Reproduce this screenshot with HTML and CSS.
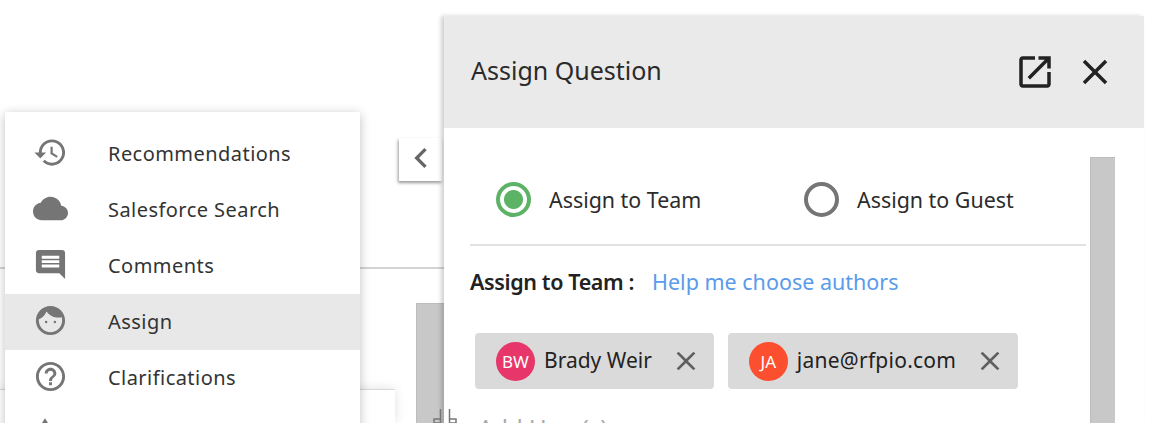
FILE: index.html
```html
<!DOCTYPE html>
<html lang="en">
<head>
<meta charset="utf-8">
<title>Assign Question</title>
<link rel="stylesheet" href="styles.css">
</head>
<body>
<div class="page">
  <div class="rule-line"></div>
  <div class="card-edge"></div>
  <div class="back-scroll"></div>
  <nav class="menu">
    <div class="menu-row">
      <svg class="menu-icon" viewBox="0 0 24 24"><path d="M13 3c-4.97 0-9 4.03-9 9H1l3.89 3.89.07.14L9 12H6c0-3.87 3.13-7 7-7s7 3.13 7 7-3.13 7-7 7c-1.93 0-3.68-.79-4.94-2.06l-1.42 1.42C8.27 19.99 10.51 21 13 21c4.97 0 9-4.03 9-9s-4.03-9-9-9zm-1 5v5l4.28 2.54.72-1.21-3.5-2.08V8H12z"/></svg>
      <span class="menu-label">Recommendations</span>
    </div>
    <div class="menu-row">
      <svg class="menu-icon" viewBox="0 0 24 24"><path d="M19.35 10.04C18.67 6.59 15.64 4 12 4 9.11 4 6.6 5.64 5.35 8.04 2.34 8.36 0 10.91 0 14c0 3.31 2.69 6 6 6h13c2.76 0 5-2.24 5-5 0-2.64-2.05-4.78-4.65-4.96z"/></svg>
      <span class="menu-label">Salesforce Search</span>
    </div>
    <div class="menu-row">
      <svg class="menu-icon" viewBox="0 0 24 24"><path d="M21.99 4c0-1.1-.89-2-1.99-2H4c-1.1 0-2 .9-2 2v12c0 1.1.9 2 2 2h14l4 4-.01-18zM18 14H6v-2h12v2zm0-3H6V9h12v2zm0-3H6V6h12v2z"/></svg>
      <span class="menu-label">Comments</span>
    </div>
    <div class="menu-row is-active">
      <svg class="menu-icon" viewBox="0 0 24 24"><circle cx="9" cy="13" r=".85"/><circle cx="15" cy="13" r=".85"/><path d="M12 2C6.48 2 2 6.48 2 12s4.48 10 10 10 10-4.48 10-10S17.52 2 12 2zm0 18c-4.41 0-8-3.59-8-8 0-.29.02-.58.05-.86 2.36-1.05 4.23-2.98 5.21-5.37C11.07 8.33 14.05 10 17.42 10c.78 0 1.53-.09 2.25-.26.21.71.33 1.47.33 2.26 0 4.41-3.59 8-8 8z"/></svg>
      <span class="menu-label">Assign</span>
    </div>
    <div class="menu-row">
      <svg class="menu-icon" viewBox="0 0 24 24"><path d="M11 18h2v-2h-2v2zm1-16C6.48 2 2 6.48 2 12s4.48 10 10 10 10-4.48 10-10S17.52 2 12 2zm0 18c-4.41 0-8-3.59-8-8s3.59-8 8-8 8 3.59 8 8-3.59 8-8 8zm0-14c-2.21 0-4 1.79-4 4h2c0-1.1.9-2 2-2s2 .9 2 2c0 2-3 1.75-3 5h2c0-2.25 3-2.5 3-5 0-2.21-1.79-4-4-4z"/></svg>
      <span class="menu-label">Clarifications</span>
    </div>
    <div class="menu-row">
      <svg class="menu-icon" viewBox="0 0 24 24"><path d="M8.2 2.2L4 9h8.4z"/></svg>
    </div>
  </nav>
  <button class="collapse" type="button" aria-label="Collapse">
    <svg class="collapse-icon" viewBox="0 0 24 24"><path d="M15.41 7.41L14 6l-6 6 6 6 1.41-1.41L10.83 12z"/></svg>
  </button>
  <section class="panel">
    <header class="panel-head">
      <h1 class="panel-title">Assign Question</h1>
      <div class="panel-actions">
        <svg class="head-icon" viewBox="0 0 24 24"><path d="M19 19H5V5h7V3H5c-1.11 0-2 .9-2 2v14c0 1.1.89 2 2 2h14c1.1 0 2-.9 2-2v-7h-2v7zM14 3v2h3.59l-9.83 9.83 1.41 1.41L19 6.41V10h2V3h-7z"/></svg>
        <svg class="head-icon" viewBox="0 0 24 24"><path d="M19 6.41L17.59 5 12 10.59 6.41 5 5 6.41 10.59 12 5 17.59 6.41 19 12 13.41 17.59 19 19 17.59 13.41 12z"/></svg>
      </div>
    </header>
    <div class="panel-body">
      <div class="panel-content">
        <div class="radios">
          <label class="radio radio-team"><span class="radio-mark is-on"></span>Assign to Team</label>
          <label class="radio"><span class="radio-mark"></span>Assign to Guest</label>
        </div>
        <div class="assign-line">
          <strong class="assign-label">Assign to Team :</strong>
          <a class="assign-link">Help me choose authors</a>
        </div>
        <div class="chips">
          <div class="chip">
            <span class="avatar avatar-bw">BW</span>
            <span class="chip-name">Brady Weir</span>
            <svg class="chip-x" viewBox="0 0 24 24"><path d="M19 6.41L17.59 5 12 10.59 6.41 5 5 6.41 10.59 12 5 17.59 6.41 19 12 13.41 17.59 19 19 17.59 13.41 12z"/></svg>
          </div>
          <div class="chip">
            <span class="avatar avatar-ja">JA</span>
            <span class="chip-name chip-mail">jane@rfpio.com</span>
            <svg class="chip-x" viewBox="0 0 24 24"><path d="M19 6.41L17.59 5 12 10.59 6.41 5 5 6.41 10.59 12 5 17.59 6.41 19 12 13.41 17.59 19 19 17.59 13.41 12z"/></svg>
          </div>
        </div>
        <div class="add-user">Add User(s)</div>
      </div>
      <div class="panel-scroll"></div>
    </div>
  </section>
  <svg class="add-glyph" viewBox="0 0 30 15"><path d="M10.5 0v14H4V10h6.5M19.5 0v14H26V10h-6.5"/></svg>
</div>
</body>
</html>
```
FILE: styles.css
```css
* { box-sizing: border-box; }
html, body { margin: 0; height: 100%; background: #fff; overflow: hidden; }
body { font-family: "Noto Sans", "Open Sans", sans-serif; color: #2b2b2b; }
.page { position: relative; width: 1155px; height: 423px; overflow: hidden; background: #fff; }

.rule-line { position: absolute; left: 0; top: 267px; width: 444px; height: 2px; background: #d4d4d4; }
.card-edge { position: absolute; left: 0; top: 389px; width: 395px; height: 34px; background: #fff; border-top: 1px solid #d8d8d8; box-shadow: 0 0 12px rgba(0,0,0,.12); }
.back-scroll { position: absolute; left: 416px; top: 303px; width: 28px; height: 120px; background: #c8c8c8; border-top: 1px solid #bcbcbc; border-left: 1px solid #bcbcbc; }

.menu { position: absolute; left: 5px; top: 112px; width: 355px; height: 330px; padding-top: 14px; background: #fff; box-shadow: 0 2px 10px rgba(0,0,0,.25); }
.menu-row { display: flex; align-items: center; gap: 40px; height: 56px; padding: 0 0 3px 28px; font-size: 20px; letter-spacing: .45px; color: #333; }
.menu-row.is-active { background: #e8e8e8; }
.menu-icon { flex: none; width: 35px; height: 35px; fill: #757575; }
.menu-label { margin-top: 2px; }

.collapse { position: absolute; left: 399px; top: 138px; display: flex; align-items: center; justify-content: center; width: 43px; height: 43px; padding: 0 0 3px; border: 0; background: #fff; box-shadow: -1px 2px 3px rgba(0,0,0,.4); }
.collapse-icon { flex: none; width: 40px; height: 40px; fill: #666; }

.panel { position: absolute; left: 444px; top: 16px; display: flex; flex-direction: column; width: 700px; height: 420px; background: #fff; box-shadow: -3px 0 4px rgba(0,0,0,.18); }
.panel-head { display: flex; flex: none; align-items: center; justify-content: space-between; height: 112px; padding: 0 28px 0 27px; background: #eaeaea; }
.panel-title { margin: 0 0 4px; font-size: 25px; font-weight: 400; color: #2b2b2b; }
.panel-actions { display: flex; gap: 18px; }
.head-icon { width: 42px; height: 42px; fill: #222; }

.panel-body { position: relative; flex: 1; padding: 0 58px 0 26px; }
.panel-scroll { position: absolute; top: 29px; left: 646px; width: 25px; height: 300px; background: #c8c8c8; border-top: 1px solid #bcbcbc; border-left: 1px solid #bcbcbc; }
.radios { display: flex; height: 118px; padding: 54px 0 0 26px; border-bottom: 2px solid #e2e2e2; }
.radio { display: flex; align-items: center; height: 35px; font-size: 21.4px; color: #2b2b2b; }
.radio-team { width: 308px; }
.radio-mark { flex: none; width: 35px; height: 35px; margin-right: 18px; border: 4px solid #757575; border-radius: 50%; }
.radio-mark.is-on { border-color: #5cb365; background: radial-gradient(circle, #5cb365 0 9px, #fff 10px); }

.assign-line { display: flex; align-items: center; gap: 18px; height: 70px; font-size: 21.5px; }
.assign-label { font-weight: 600; letter-spacing: -.38px; color: #222; }
.assign-link { color: #5a9bea; }

.chips { display: flex; gap: 14px; margin: 17px 0 0 5px; }
.chip { display: flex; align-items: center; height: 56px; padding: 0 12px 0 21px; border-radius: 4px; background: #dadada; font-size: 21px; color: #222; }
.avatar { display: flex; flex: none; align-items: center; justify-content: center; width: 39px; height: 39px; margin-right: 9px; border-radius: 50%; font-size: 17px; color: #fff; }
.avatar-bw { background: #e73669; }
.avatar-ja { background: #fb4f2f; }
.chip-name { margin: 0 18px 2px 0; }
.chip-mail { letter-spacing: .25px; }
.chip-x { flex: none; width: 32px; height: 32px; fill: #5f5f5f; }
.add-user { margin: 22px 0 0 8px; font-size: 24px; color: #aaa; }
.add-glyph { position: absolute; left: 430px; top: 409px; width: 30px; height: 15px; fill: none; stroke: #777; stroke-width: 1.5; }
```
